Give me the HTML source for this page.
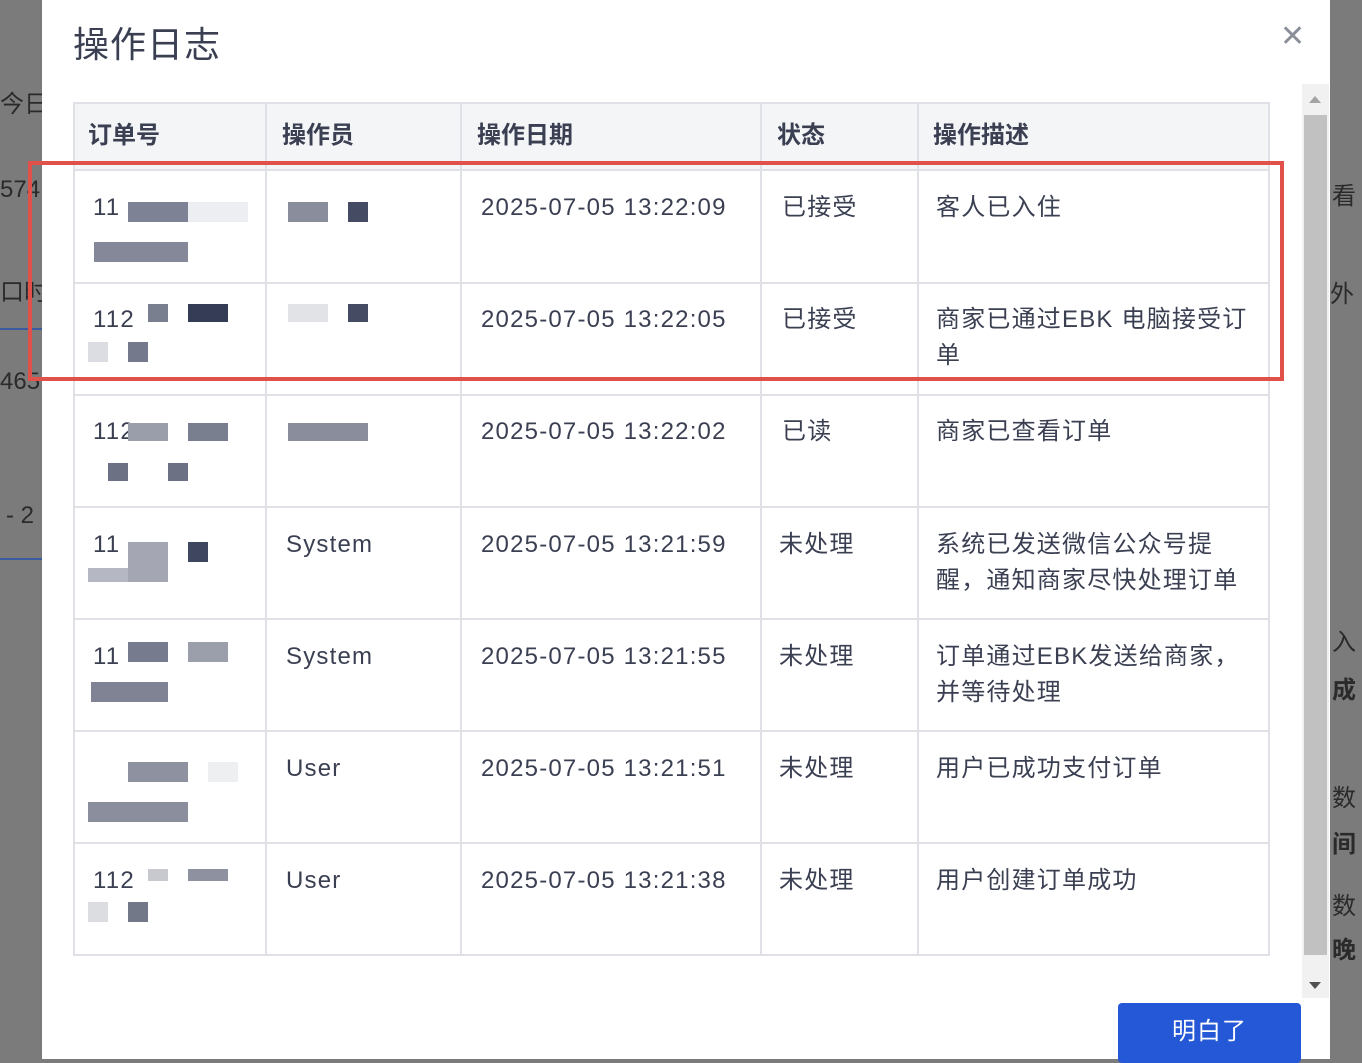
<!DOCTYPE html>
<html><head><meta charset="utf-8"><style>
*{margin:0;padding:0;box-sizing:border-box}
body{width:1362px;height:1059px;overflow:hidden;background:#7b7b7b;position:relative;font-family:"Liberation Sans","Noto Sans CJK SC",sans-serif;color:#3a3f52}
.a{position:absolute}
.modal{left:42px;top:0;width:1288px;height:1059px;background:#fff}
.bg{font-size:24px;color:#2a2a2a}
.t{font-size:24px;line-height:36px;letter-spacing:1.2px}
.h{font-size:24px;font-weight:bold;line-height:36px}
.vl{width:2px;background:#dfe1e6}
.hl{height:2px;background:#dfe1e6}
</style></head><body>
<div class="a bg" style="left:0;top:84px">今日</div>
<div class="a bg" style="left:0;top:176px">574</div>
<div class="a bg" style="left:0;top:272px">口时</div>
<div class="a bg" style="left:0;top:368px">465</div>
<div class="a bg" style="left:6px;top:502px">- 2</div>
<div class="a" style="left:0;top:558px;width:42px;height:2px;background:#3b5aa0"></div>
<div class="a" style="left:0;top:328px;width:42px;height:2px;background:#3b5aa0"></div>
<div class="a bg" style="left:1332px;top:176px">看</div>
<div class="a bg" style="left:1330px;top:274px">外</div>
<div class="a bg" style="left:1332px;top:622px">入</div>
<div class="a bg" style="left:1332px;top:670px;font-weight:bold">成</div>
<div class="a bg" style="left:1332px;top:778px">数</div>
<div class="a bg" style="left:1332px;top:824px;font-weight:bold">间</div>
<div class="a bg" style="left:1332px;top:886px">数</div>
<div class="a bg" style="left:1332px;top:930px;font-weight:bold">晚</div>

<div class="a modal"></div>
<div class="a" style="left:73px;top:22px;font-size:36px;line-height:46px;color:#3a3f52;letter-spacing:1px">操作日志</div>
<div class="a" style="left:1280px;top:22px;font-size:30px;color:#8a8f99;line-height:30px">✕</div>

<div class="a" style="left:73px;top:102px;width:1197px;height:69px;background:#f4f5f7"></div>
<div class="a" style="left:73px;top:102px;width:1197px;height:854px;border:2px solid #dfe1e6"></div>
<div class="a vl" style="left:265px;top:102px;height:854px"></div>
<div class="a vl" style="left:460px;top:102px;height:854px"></div>
<div class="a vl" style="left:760px;top:102px;height:854px"></div>
<div class="a vl" style="left:917px;top:102px;height:854px"></div>
<div class="a hl" style="left:73px;top:169px;width:1197px"></div>
<div class="a hl" style="left:73px;top:282px;width:1197px"></div>
<div class="a hl" style="left:73px;top:394px;width:1197px"></div>
<div class="a hl" style="left:73px;top:506px;width:1197px"></div>
<div class="a hl" style="left:73px;top:618px;width:1197px"></div>
<div class="a hl" style="left:73px;top:730px;width:1197px"></div>
<div class="a hl" style="left:73px;top:842px;width:1197px"></div>

<div class="a h" style="left:88px;top:118px">订单号</div>
<div class="a h" style="left:282px;top:118px">操作员</div>
<div class="a h" style="left:477px;top:118px">操作日期</div>
<div class="a h" style="left:777px;top:118px">状态</div>
<div class="a h" style="left:933px;top:118px">操作描述</div>

<div class="a t" style="left:93px;top:190px">11</div>
<div class="a t" style="left:481px;top:190px">2025-07-05 13:22:09</div>
<div class="a t" style="left:782px;top:190px">已接受</div>
<div class="a t" style="left:936px;top:190px">客人已入住</div>

<div class="a t" style="left:93px;top:302px">112</div>
<div class="a t" style="left:481px;top:302px">2025-07-05 13:22:05</div>
<div class="a t" style="left:782px;top:302px">已接受</div>
<div class="a t" style="left:936px;top:302px;width:330px">商家已通过EBK 电脑接受订<br>单</div>

<div class="a t" style="left:93px;top:414px">112</div>
<div class="a t" style="left:481px;top:414px">2025-07-05 13:22:02</div>
<div class="a t" style="left:782px;top:414px">已读</div>
<div class="a t" style="left:936px;top:414px">商家已查看订单</div>

<div class="a t" style="left:93px;top:527px">11</div>
<div class="a t" style="left:286px;top:527px">System</div>
<div class="a t" style="left:481px;top:527px">2025-07-05 13:21:59</div>
<div class="a t" style="left:779px;top:527px">未处理</div>
<div class="a t" style="left:936px;top:527px">系统已发送微信公众号提<br>醒，通知商家尽快处理订单</div>

<div class="a t" style="left:93px;top:639px">11</div>
<div class="a t" style="left:286px;top:639px">System</div>
<div class="a t" style="left:481px;top:639px">2025-07-05 13:21:55</div>
<div class="a t" style="left:779px;top:639px">未处理</div>
<div class="a t" style="left:936px;top:639px">订单通过EBK发送给商家，<br>并等待处理</div>

<div class="a t" style="left:286px;top:751px">User</div>
<div class="a t" style="left:481px;top:751px">2025-07-05 13:21:51</div>
<div class="a t" style="left:779px;top:751px">未处理</div>
<div class="a t" style="left:936px;top:751px">用户已成功支付订单</div>

<div class="a t" style="left:93px;top:863px">112</div>
<div class="a t" style="left:286px;top:863px">User</div>
<div class="a t" style="left:481px;top:863px">2025-07-05 13:21:38</div>
<div class="a t" style="left:779px;top:863px">未处理</div>
<div class="a t" style="left:936px;top:863px">用户创建订单成功</div>

<div class="a" style="left:128px;top:202px;width:60px;height:20px;background:#7d8294"></div>
<div class="a" style="left:188px;top:202px;width:60px;height:20px;background:#eceef1"></div>
<div class="a" style="left:94px;top:242px;width:94px;height:20px;background:#848899"></div>
<div class="a" style="left:288px;top:202px;width:40px;height:20px;background:#8a8e9c"></div>
<div class="a" style="left:348px;top:202px;width:20px;height:20px;background:#454b62"></div>
<div class="a" style="left:148px;top:304px;width:20px;height:18px;background:#7a7f8f"></div>
<div class="a" style="left:188px;top:304px;width:40px;height:18px;background:#353c55"></div>
<div class="a" style="left:88px;top:342px;width:20px;height:20px;background:#dcdde2"></div>
<div class="a" style="left:128px;top:342px;width:20px;height:20px;background:#747a8b"></div>
<div class="a" style="left:288px;top:304px;width:40px;height:18px;background:#e2e3e7"></div>
<div class="a" style="left:348px;top:304px;width:20px;height:18px;background:#454b62"></div>
<div class="a" style="left:128px;top:423px;width:40px;height:18px;background:#9a9eab"></div>
<div class="a" style="left:188px;top:423px;width:40px;height:18px;background:#7a7f8f"></div>
<div class="a" style="left:108px;top:463px;width:20px;height:18px;background:#6c7183"></div>
<div class="a" style="left:168px;top:463px;width:20px;height:18px;background:#6c7183"></div>
<div class="a" style="left:288px;top:423px;width:80px;height:18px;background:#8a8e9c"></div>
<div class="a" style="left:128px;top:542px;width:40px;height:40px;background:#a4a7b3"></div>
<div class="a" style="left:88px;top:568px;width:40px;height:14px;background:#b5b8c2"></div>
<div class="a" style="left:188px;top:542px;width:20px;height:20px;background:#3f4660"></div>
<div class="a" style="left:128px;top:642px;width:40px;height:20px;background:#767b8d"></div>
<div class="a" style="left:188px;top:642px;width:40px;height:20px;background:#9b9eab"></div>
<div class="a" style="left:91px;top:682px;width:77px;height:20px;background:#7f8393"></div>
<div class="a" style="left:128px;top:762px;width:60px;height:20px;background:#8e92a0"></div>
<div class="a" style="left:208px;top:762px;width:30px;height:20px;background:#eeeff1"></div>
<div class="a" style="left:88px;top:802px;width:100px;height:20px;background:#8a8e9d"></div>
<div class="a" style="left:148px;top:869px;width:20px;height:12px;background:#c8c9cf"></div>
<div class="a" style="left:188px;top:869px;width:40px;height:12px;background:#8d91a0"></div>
<div class="a" style="left:88px;top:902px;width:20px;height:20px;background:#dcdde1"></div>
<div class="a" style="left:128px;top:902px;width:20px;height:20px;background:#737889"></div>

<div class="a" style="left:28px;top:161px;width:1256px;height:220px;border:4px solid #e0514a"></div>

<div class="a" style="left:1302px;top:84px;width:27px;height:914px;background:#f1f1f1"></div>
<div class="a" style="left:1304px;top:115px;width:23px;height:840px;background:#c1c1c1"></div>
<div class="a" style="left:1309px;top:96px;width:0;height:0;border-left:6px solid transparent;border-right:6px solid transparent;border-bottom:7px solid #a3a3a3"></div>
<div class="a" style="left:1309px;top:982px;width:0;height:0;border-left:6px solid transparent;border-right:6px solid transparent;border-top:7px solid #505050"></div>

<div class="a" style="left:1118px;top:1003px;width:183px;height:60px;background:#2458d6;border-radius:4px;color:#fff;font-size:24px;text-align:center;line-height:58px;letter-spacing:1px">明白了</div>
</body></html>
